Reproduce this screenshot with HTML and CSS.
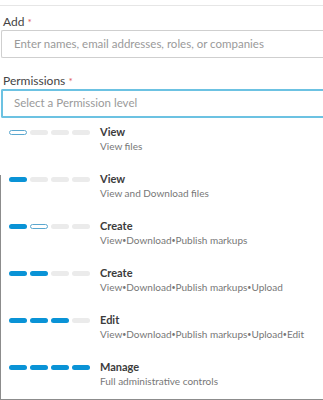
FILE: index.html
```html
<!DOCTYPE html>
<html>
<head>
<meta charset="utf-8">
<link rel="stylesheet" href="styles.css">
</head>
<body>
<div class="page">
  <div class="topline"></div>
  <div class="field">
    <label class="label">Add <span class="req">*</span></label>
    <div class="input">Enter names, email addresses, roles, or companies</div>
  </div>
  <div class="field">
    <label class="label">Permissions <span class="req">*</span></label>
    <div class="input select">Select a Permission level</div>
  </div>
  <ul class="menu">
    <li class="item">
      <div class="bars"><span class="bar outline"></span><span class="bar"></span><span class="bar"></span><span class="bar"></span></div>
      <div class="text"><div class="title">View</div><div class="sub">View files</div></div>
    </li>
    <li class="item">
      <div class="bars"><span class="bar on"></span><span class="bar"></span><span class="bar"></span><span class="bar"></span></div>
      <div class="text"><div class="title">View</div><div class="sub">View and Download files</div></div>
    </li>
    <li class="item">
      <div class="bars"><span class="bar on"></span><span class="bar outline"></span><span class="bar"></span><span class="bar"></span></div>
      <div class="text"><div class="title">Create</div><div class="sub">View<span class="dot">•</span>Download<span class="dot">•</span>Publish markups</div></div>
    </li>
    <li class="item">
      <div class="bars"><span class="bar on"></span><span class="bar on"></span><span class="bar"></span><span class="bar"></span></div>
      <div class="text"><div class="title">Create</div><div class="sub">View<span class="dot">•</span>Download<span class="dot">•</span>Publish markups<span class="dot">•</span>Upload</div></div>
    </li>
    <li class="item">
      <div class="bars"><span class="bar on"></span><span class="bar on"></span><span class="bar on"></span><span class="bar"></span></div>
      <div class="text"><div class="title">Edit</div><div class="sub">View<span class="dot">•</span>Download<span class="dot">•</span>Publish markups<span class="dot">•</span>Upload<span class="dot">•</span>Edit</div></div>
    </li>
    <li class="item">
      <div class="bars"><span class="bar on"></span><span class="bar on"></span><span class="bar on"></span><span class="bar on"></span></div>
      <div class="text"><div class="title">Manage</div><div class="sub">Full administrative controls</div></div>
    </li>
  </ul>
</div>
</body>
</html>
```
FILE: styles.css
```css
html, body {
  margin: 0;
  padding: 0;
  background: #ffffff;
  overflow: hidden;
}
.page {
  width: 323px;
  height: 400px;
  font-family: Lato, "Noto Sans", sans-serif;
  color: #3c3c3c;
  padding-top: 5px;
  box-sizing: border-box;
}
.topline {
  height: 1px;
  background: #e6e6e6;
  margin-bottom: 8px;
}
.field {
  display: flex;
  flex-direction: column;
}
.field + .field {
  margin-top: 15px;
}
.label {
  font-size: 12px;
  line-height: 15px;
  padding-left: 3px;
  color: #444;
}
.req {
  color: #e05a5a;
  font-size: 10px;
}
.input {
  margin-left: 1px;
  height: 28px;
  box-sizing: border-box;
  border: 1px solid #cfcfcf;
  border-right: 0;
  border-radius: 2px 0 0 2px;
  padding-left: 12px;
  font-size: 11.5px;
  line-height: 26px;
  color: #9a9a9a;
  white-space: nowrap;
  overflow: hidden;
}
.select {
  height: 29px;
  border: 2px solid #6cc2e2;
  border-right: 0;
  padding-left: 11px;
  line-height: 24px;
}
.menu {
  list-style: none;
  margin: 0;
  padding: 0;
  height: 282px;
  box-sizing: border-box;
  border-left: 1px solid transparent;
  border-image: linear-gradient(to bottom, transparent 58px, #8c8c8c 58px) 1;
  border-bottom: 1px solid #8c8c8c;
}
.item {
  display: flex;
  align-items: flex-start;
  height: 47px;
  box-sizing: border-box;
  padding-top: 7px;
  padding-left: 8px;
}
.bars {
  display: flex;
  gap: 3px;
  width: 81px;
  margin-top: 5px;
  margin-right: 10px;
}
.bar {
  width: 18px;
  height: 5px;
  border-radius: 3px;
  background: #ebebeb;
  box-sizing: border-box;
}
.bar.on {
  background: #0a93d6;
}
.bar.outline {
  background: #ffffff;
  border: 1px solid #5aa7cf;
}
.text {
  display: flex;
  flex-direction: column;
}
.title {
  font-size: 11px;
  line-height: 14px;
  font-weight: 700;
  color: #3c3c3c;
}
.sub {
  font-size: 10px;
  line-height: 14px;
  color: #777;
  white-space: nowrap;
}
.dot {
  font-size: 7px;
  vertical-align: 1px;
}
```
